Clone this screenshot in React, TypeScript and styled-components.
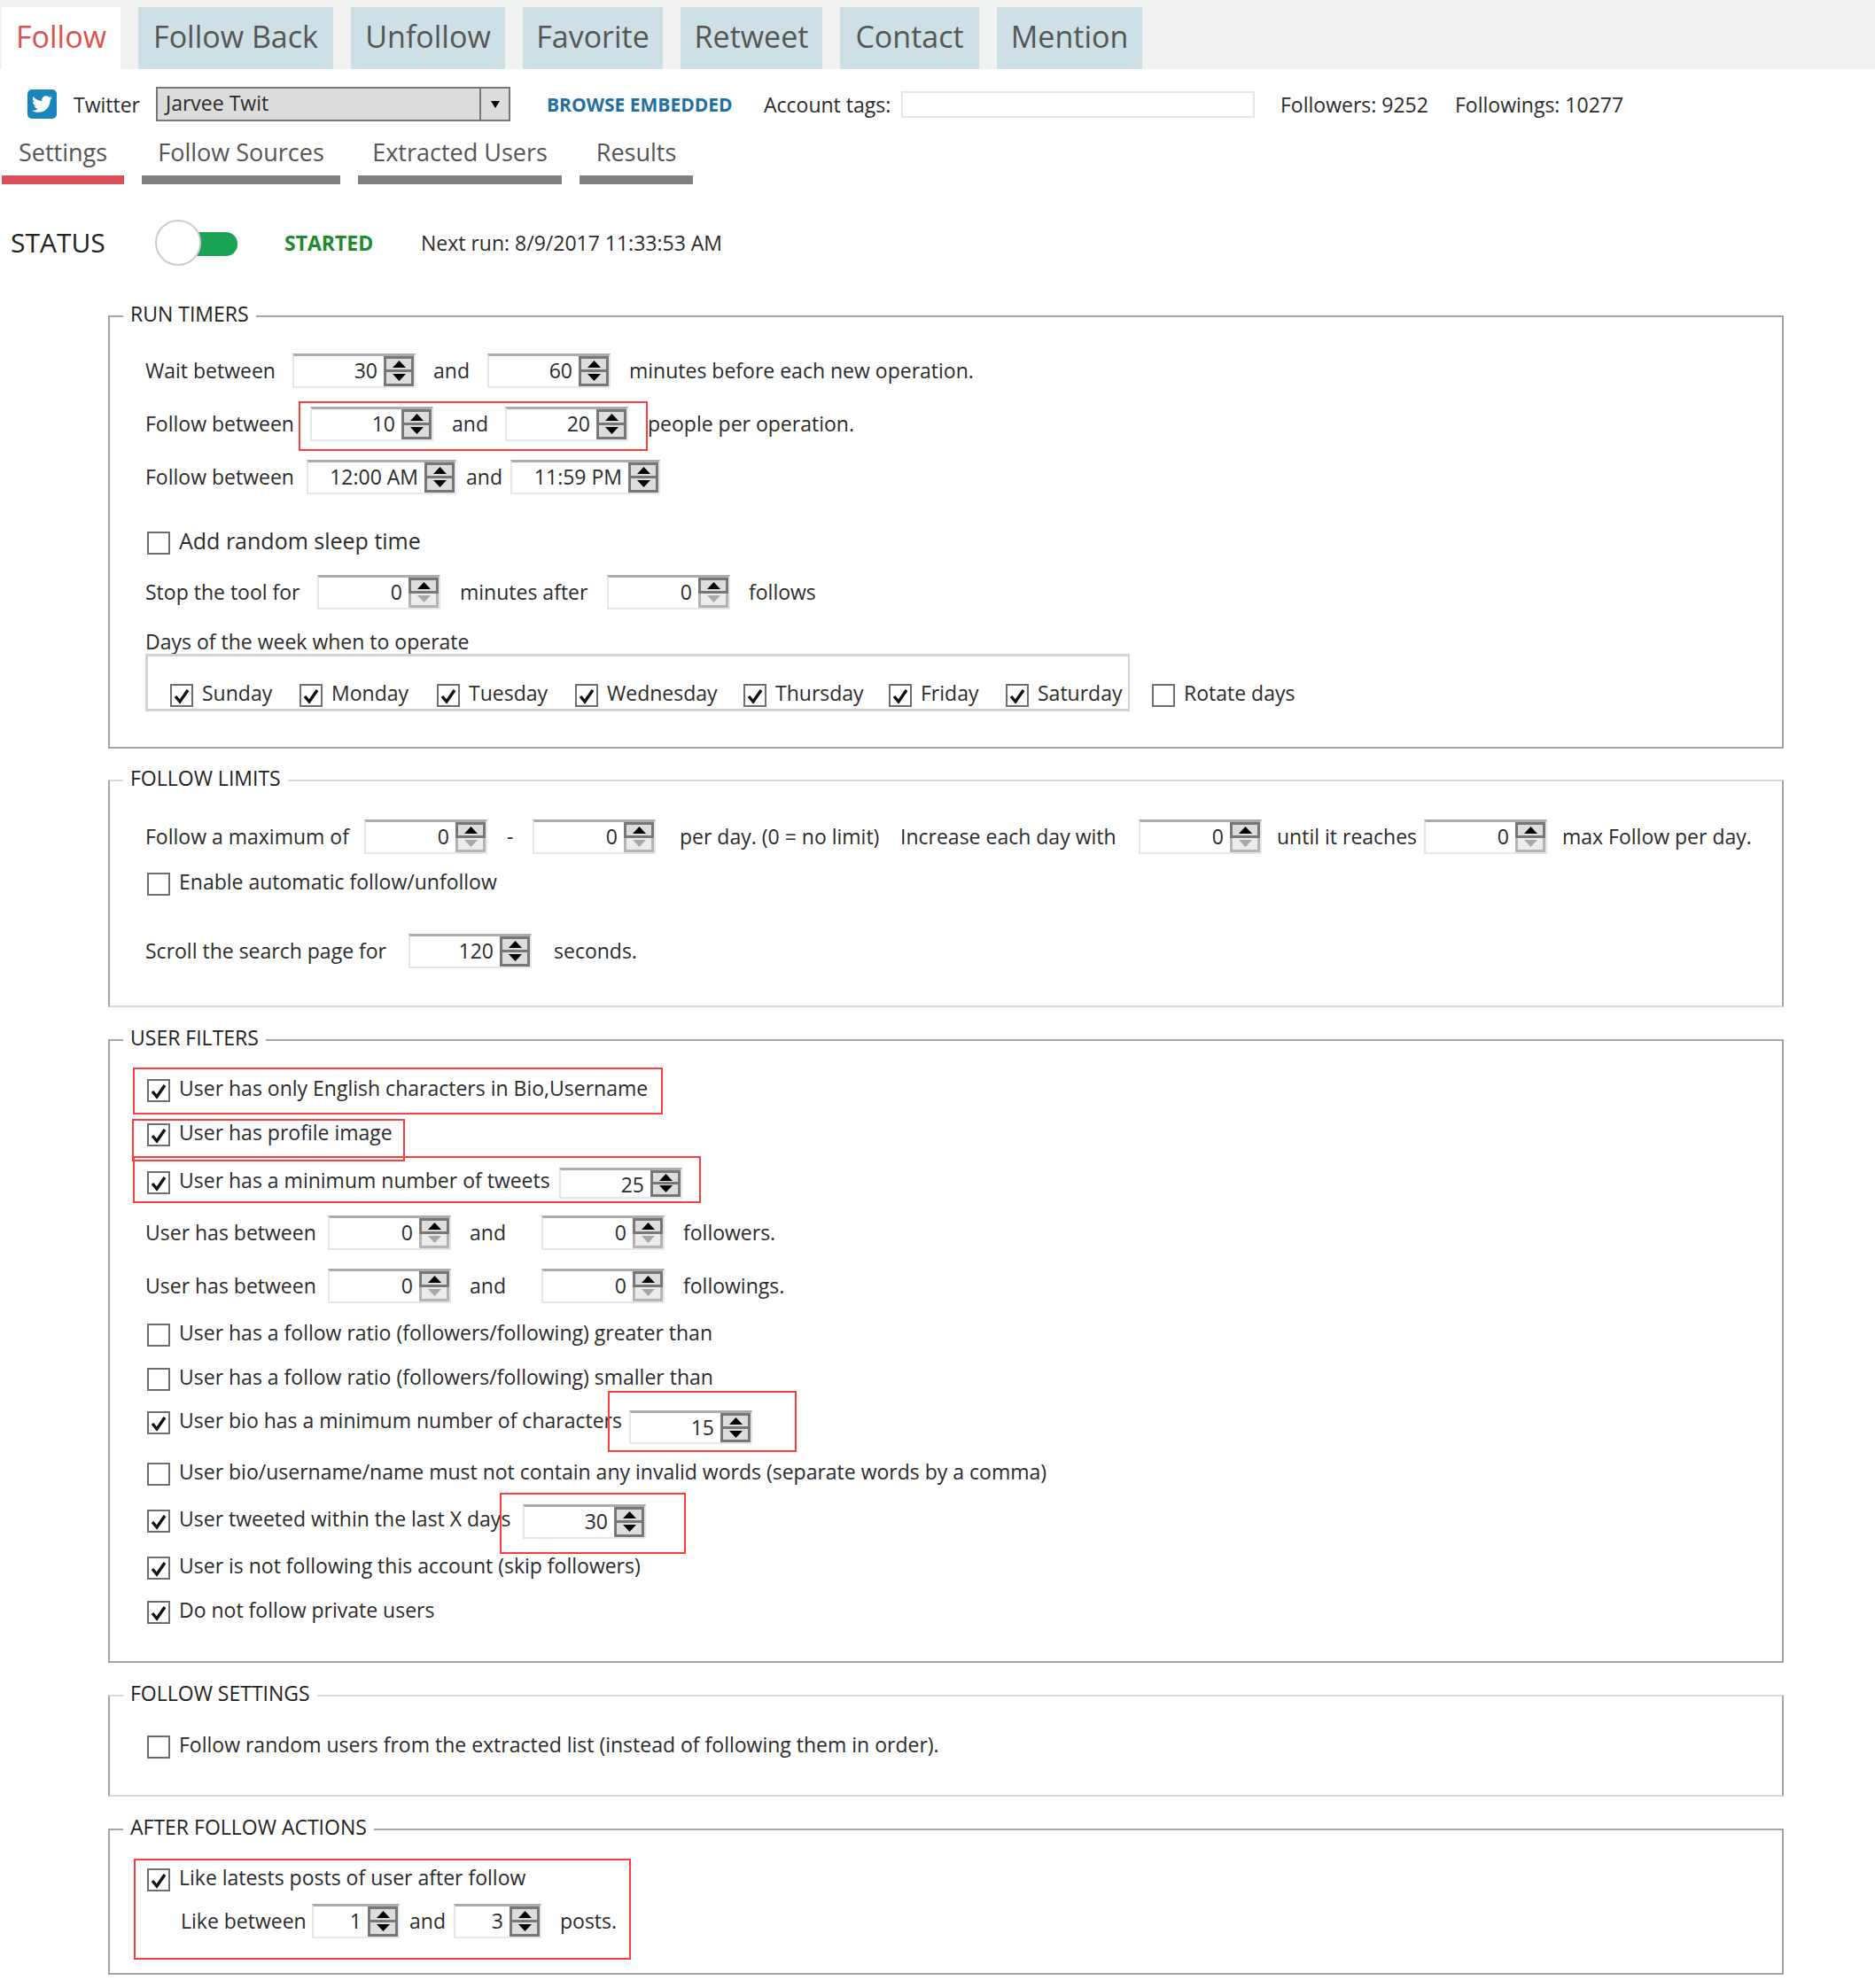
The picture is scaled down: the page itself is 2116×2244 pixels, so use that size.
import styled, { createGlobalStyle } from "styled-components";
import { FaTwitter } from "react-icons/fa";

const GlobalStyle = createGlobalStyle`
  html, body {
    margin: 0;
    padding: 0;
    background: #ffffff;
  }
  body {
    font-family: "Open Sans", "Liberation Sans", sans-serif;
    color: #2b2b2b;
  }
`;

const topTabs = ["Follow Back", "Unfollow", "Favorite", "Retweet", "Contact", "Mention"];
const tabWidths = [220, 174, 158, 160, 157, 164];
const subTabs = [
  { label: "Settings", width: 138 },
  { label: "Follow Sources", width: 224 },
  { label: "Extracted Users", width: 230 },
  { label: "Results", width: 128 },
];
const days = [
  { label: "Sunday", width: 146 },
  { label: "Monday", width: 155 },
  { label: "Tuesday", width: 156 },
  { label: "Wednesday", width: 190 },
  { label: "Thursday", width: 164 },
  { label: "Friday", width: 132 },
  { label: "Saturday", width: 129 },
];

const Arrow = ({ down, muted }: { down?: boolean; muted?: boolean }) => (
  <svg width="15" height="8" viewBox="0 0 15 8">
    <path d={down ? "M0 0H15L7.5 8Z" : "M0 8H15L7.5 0Z"} fill={muted ? "#a8a8a8" : "#000"} />
  </svg>
);

const Spinner = ({
  value,
  w = 139,
  h = 39,
  top = 0,
  muted,
}: {
  value: string;
  w?: number;
  h?: number;
  top?: number;
  muted?: boolean;
}) => (
  <SpinBox $w={w} $h={h} $top={top}>
    <SpinValue>{value}</SpinValue>
    <SpinButtons>
      <SpinButton>
        <Arrow />
      </SpinButton>
      <SpinButton $muted={muted} $lower>
        <Arrow down muted={muted} />
      </SpinButton>
    </SpinButtons>
  </SpinBox>
);

const Check = ({ on, label, large }: { on?: boolean; label: string; large?: boolean }) => (
  <CheckWrap>
    <CheckBox>
      {on && (
        <svg width="22" height="22" viewBox="0 0 22 22">
          <path d="M4 12L9 18L18 5" fill="none" stroke="#111" strokeWidth="3.4" />
        </svg>
      )}
    </CheckBox>
    <CheckText $large={large}>{label}</CheckText>
  </CheckWrap>
);

const App = () => {
  return (
    <Page>
      <GlobalStyle />
      <TabBar>
        <ActiveTab>Follow</ActiveTab>
        {topTabs.map((tab, i) => (
          <Tab key={tab} $w={tabWidths[i]}>
            {tab}
          </Tab>
        ))}
      </TabBar>

      <AccountBar>
        <TwitterIcon>
          <FaTwitter size={23} color="#ffffff" />
        </TwitterIcon>
        <Text $w={93} $ml={19}>
          Twitter
        </Text>
        <Select>
          <SelectValue>Jarvee Twit</SelectValue>
          <SelectArrow>
            <svg width="10" height="8" viewBox="0 0 10 8">
              <path d="M0 0H10L5 8Z" fill="#000" />
            </svg>
          </SelectArrow>
        </Select>
        <BrowseLink>BROWSE EMBEDDED</BrowseLink>
        <Text $w={155}>Account tags:</Text>
        <TagsInput />
        <Text $w={197} $ml={29}>
          Followers: 9252
        </Text>
        <Text>Followings: 10277</Text>
      </AccountBar>

      <SubTabBar>
        {subTabs.map((tab, i) => (
          <SubTab key={tab.label} $w={tab.width} $active={i === 0}>
            {tab.label}
          </SubTab>
        ))}
      </SubTabBar>

      <StatusRow>
        <StatusLabel>STATUS</StatusLabel>
        <Toggle>
          <ToggleTrack />
          <ToggleKnob />
        </Toggle>
        <StartedText>STARTED</StartedText>
        <Text>Next run: 8/9/2017 11:33:53 AM</Text>
      </StatusRow>

      <Group $mt={39}>
        <GroupTitle>RUN TIMERS</GroupTitle>
        <Row $mt={24}>
          <Text $w={166}>Wait between</Text>
          <Spinner value="30" />
          <Text $w={61} $ml={20}>
            and
          </Text>
          <Spinner value="60" />
          <Text $ml={21}>minutes before each new operation.</Text>
        </Row>
        <Row $mt={20}>
          <Text $w={186}>Follow between</Text>
          <Spinner value="10" />
          <Text $w={60} $ml={21}>
            and
          </Text>
          <Spinner value="20" />
          <Text $ml={22}>people per operation.</Text>
        </Row>
        <Row $mt={20}>
          <Text $w={182}>Follow between</Text>
          <Spinner value="12:00 AM" w={169} />
          <Text $w={50} $ml={11}>
            and
          </Text>
          <Spinner value="11:59 PM" w={169} />
        </Row>
        <Row $mt={35}>
          <Check label="Add random sleep time" large />
        </Row>
        <Row $mt={15}>
          <Text $w={194}>Stop the tool for</Text>
          <Spinner value="0" muted />
          <Text $w={166} $ml={22}>
            minutes after
          </Text>
          <Spinner value="0" muted />
          <Text $ml={21}>follows</Text>
        </Row>
        <LabelRow>Days of the week when to operate</LabelRow>
        <DaysRow>
          <DaysBox>
            {days.map((day) => (
              <DayItem key={day.label} $w={day.width}>
                <Check on label={day.label} />
              </DayItem>
            ))}
          </DaysBox>
          <RotateDays>
            <Check label="Rotate days" />
          </RotateDays>
        </DaysRow>
        <GroupEnd $h={40} />
      </Group>

      <Group $mt={19} $light>
        <GroupTitle>FOLLOW LIMITS</GroupTitle>
        <Row $mt={26}>
          <Text $w={247}>Follow a maximum of</Text>
          <Spinner value="0" muted />
          <Text $w={29} $ml={22}>
            -
          </Text>
          <Spinner value="0" muted />
          <Text $w={249} $ml={27}>
            per day. (0 = no limit)
          </Text>
          <Text $w={269}>Increase each day with</Text>
          <Spinner value="0" muted />
          <Text $w={166} $ml={17}>
            until it reaches
          </Text>
          <Spinner value="0" muted />
          <Text $ml={17}>max Follow per day.</Text>
        </Row>
        <Row $mt={14}>
          <Check label="Enable automatic follow/unfollow" />
        </Row>
        <Row $mt={35}>
          <Text $w={297}>Scroll the search page for</Text>
          <Spinner value="120" />
          <Text $ml={25}>seconds.</Text>
        </Row>
        <GroupEnd $h={42} />
      </Group>

      <Group $mt={20}>
        <GroupTitle>USER FILTERS</GroupTitle>
        <Row $mt={20}>
          <Check on label="User has only English characters in Bio,Username" />
        </Row>
        <Row $mt={10}>
          <Check on label="User has profile image" />
        </Row>
        <Row $mt={14}>
          <FixedCheck $w={467}>
            <Check on label="User has a minimum number of tweets" />
          </FixedCheck>
          <Spinner value="25" h={35} />
        </Row>
        <Row $mt={16}>
          <Text $w={206}>User has between</Text>
          <Spinner value="0" muted />
          <Text $w={81} $ml={21}>
            and
          </Text>
          <Spinner value="0" muted />
          <Text $ml={21}>followers.</Text>
        </Row>
        <Row $mt={20}>
          <Text $w={206}>User has between</Text>
          <Spinner value="0" muted />
          <Text $w={81} $ml={21}>
            and
          </Text>
          <Spinner value="0" muted />
          <Text $ml={21}>followings.</Text>
        </Row>
        <Row $mt={16}>
          <Check label="User has a follow ratio (followers/following) greater than" />
        </Row>
        <Row $mt={10}>
          <Check label="User has a follow ratio (followers/following) smaller than" />
        </Row>
        <Row $mt={9}>
          <FixedCheck $w={546}>
            <Check on label="User bio has a minimum number of characters" />
          </FixedCheck>
          <Spinner value="15" h={38} top={10} />
        </Row>
        <Row $mt={18}>
          <Check label="User bio/username/name must not contain any invalid words (separate words by a comma)" />
        </Row>
        <Row $mt={13}>
          <FixedCheck $w={426}>
            <Check on label="User tweeted within the last X days" />
          </FixedCheck>
          <Spinner value="30" />
        </Row>
        <Row $mt={13}>
          <Check on label="User is not following this account (skip followers)" />
        </Row>
        <Row $mt={10}>
          <Check on label="Do not follow private users" />
        </Row>
        <GroupEnd $h={35} />
      </Group>

      <Group $mt={20} $light>
        <GroupTitle>FOLLOW SETTINGS</GroupTitle>
        <Row $mt={21}>
          <Check label="Follow random users from the extracted list (instead of following them in order)." />
        </Row>
        <GroupEnd $h={34} />
      </Group>

      <Group $mt={20}>
        <GroupTitle>AFTER FOLLOW ACTIONS</GroupTitle>
        <Row $mt={20}>
          <Check on label="Like latests posts of user after follow" />
        </Row>
        <Row $mt={6}>
          <Text $w={148} $ml={40}>
            Like between
          </Text>
          <Spinner value="1" w={99} />
          <Text $w={50} $ml={11}>
            and
          </Text>
          <Spinner value="3" w={99} />
          <Text $ml={21}>posts.</Text>
        </Row>
        <GroupEnd $h={39} />
      </Group>

      <Highlight $x={337} $y={453} $w={394} $h={56} />
      <Highlight $x={150} $y={1205} $w={598} $h={53} />
      <Highlight $x={149} $y={1263} $w={308} $h={48} />
      <Highlight $x={150} $y={1305} $w={641} $h={53} />
      <Highlight $x={686} $y={1570} $w={213} $h={69} />
      <Highlight $x={564} $y={1685} $w={210} $h={69} />
      <Highlight $x={151} $y={2098} $w={561} $h={114} />
    </Page>
  );
};

const Page = styled.div`
  position: relative;
  width: 2116px;
  min-height: 2244px;
  overflow: hidden;
`;

const TabBar = styled.div`
  display: flex;
  gap: 20px;
  height: 70px;
  padding: 8px 0 0 2px;
  background: #f1f3f3;
`;

const ActiveTab = styled.div`
  width: 134px;
  background: #ffffff;
  color: #d9534f;
  font-size: 34px;
  line-height: 66px;
  text-align: center;
`;

const Tab = styled.div<{ $w: number }>`
  width: ${(p) => p.$w}px;
  background: #cde0e6;
  color: #555555;
  font-size: 34px;
  line-height: 66px;
  text-align: center;
`;

const AccountBar = styled.div`
  display: flex;
  align-items: center;
  height: 39px;
  margin-top: 20px;
  padding-left: 31px;
`;

const TwitterIcon = styled.div`
  display: flex;
  align-items: center;
  justify-content: center;
  width: 33px;
  height: 33px;
  border-radius: 5px;
  background: #1a85bd;
`;

const Text = styled.div<{ $w?: number; $ml?: number }>`
  flex: none;
  width: ${(p) => (p.$w ? `${p.$w}px` : "auto")};
  margin-left: ${(p) => p.$ml || 0}px;
  font-size: 23px;
  line-height: 30px;
  white-space: nowrap;
`;

const Select = styled.div`
  display: flex;
  box-sizing: border-box;
  width: 400px;
  height: 39px;
  border: 2px solid #777777;
  background: #dcdcdc;
`;

const SelectValue = styled.div`
  flex: 1;
  padding-left: 9px;
  font-size: 23px;
  line-height: 33px;
`;

const SelectArrow = styled.div`
  display: flex;
  align-items: center;
  justify-content: center;
  width: 31px;
  border-left: 2px solid #777777;
`;

const BrowseLink = styled.div`
  flex: none;
  width: 245px;
  margin-left: 41px;
  color: #1f6fa3;
  font-size: 21px;
  font-weight: 700;
  white-space: nowrap;
`;

const TagsInput = styled.div`
  flex: none;
  box-sizing: border-box;
  width: 399px;
  height: 30px;
  border: 2px solid #e3e6ea;
  background: #ffffff;
`;

const SubTabBar = styled.div`
  display: flex;
  gap: 20px;
  margin: 13px 0 0 2px;
`;

const SubTab = styled.div<{ $w: number; $active?: boolean }>`
  box-sizing: border-box;
  width: ${(p) => p.$w}px;
  height: 58px;
  border-bottom: 10px solid ${(p) => (p.$active ? "#d9505a" : "#808080")};
  color: #555555;
  font-size: 27px;
  line-height: 44px;
  text-align: center;
  white-space: nowrap;
`;

const StatusRow = styled.div`
  display: flex;
  align-items: center;
  height: 54px;
  margin-top: 39px;
  padding-left: 12px;
`;

const StatusLabel = styled.div`
  width: 163px;
  font-size: 30px;
  line-height: 36px;
  color: #222222;
`;

const Toggle = styled.div`
  position: relative;
  width: 93px;
  height: 54px;
`;

const ToggleTrack = styled.div`
  position: absolute;
  top: 15px;
  left: 20px;
  width: 73px;
  height: 27px;
  border-radius: 0 13px 13px 0;
  background: #1ba355;
`;

const ToggleKnob = styled.div`
  position: absolute;
  top: 1px;
  left: 0;
  box-sizing: border-box;
  width: 52px;
  height: 52px;
  border: 2px solid #cfcccc;
  border-radius: 50%;
  background: #ffffff;
`;

const StartedText = styled.div`
  width: 154px;
  margin-left: 53px;
  color: #1e8a2e;
  font-size: 23px;
  font-weight: 700;
`;

const Group = styled.fieldset<{ $mt: number; $light?: boolean }>`
  box-sizing: border-box;
  width: 1891px;
  margin: ${(p) => p.$mt}px 0 0 122px;
  padding: 0 0 0 40px;
  border: 2px solid #a5a5a5;
  border-top-color: ${(p) => (p.$light ? "#d8d8d8" : "#a5a5a5")};
  border-bottom-color: ${(p) => (p.$light ? "#d8d8d8" : "#a5a5a5")};
  min-inline-size: 0;
`;

const GroupTitle = styled.legend`
  height: 34px;
  margin-left: -25px;
  padding: 0 8px;
  color: #222222;
  font-size: 23px;
  line-height: 28px;
`;

const GroupEnd = styled.div<{ $h: number }>`
  height: ${(p) => p.$h}px;
`;

const Row = styled.div<{ $mt: number }>`
  display: flex;
  align-items: center;
  height: 40px;
  margin-top: ${(p) => p.$mt}px;
`;

const LabelRow = styled.div`
  height: 28px;
  margin-top: 22px;
  font-size: 23px;
  line-height: 28px;
`;

const DaysRow = styled.div`
  display: flex;
`;

const DaysBox = styled.div`
  display: flex;
  box-sizing: border-box;
  width: 1111px;
  height: 65px;
  padding: 26px 0 0 23px;
  border: 3px solid #d2d2d2;
  border-right-width: 2px;
`;

const DayItem = styled.div<{ $w: number }>`
  width: ${(p) => p.$w}px;
`;

const RotateDays = styled.div`
  margin: 29px 0 0 23px;
`;

const FixedCheck = styled.div<{ $w: number }>`
  flex: none;
  width: ${(p) => p.$w}px;
`;

const CheckWrap = styled.div`
  display: flex;
  align-items: center;
  margin-left: 2px;
`;

const CheckBox = styled.div`
  display: flex;
  flex: none;
  align-items: center;
  justify-content: center;
  box-sizing: border-box;
  width: 26px;
  height: 26px;
  border: 2px solid #6f6f6f;
`;

const CheckText = styled.div<{ $large?: boolean }>`
  margin-left: 10px;
  padding-bottom: 6px;
  font-size: ${(p) => (p.$large ? 25 : 23)}px;
  line-height: 30px;
  white-space: nowrap;
`;

const SpinBox = styled.div<{ $w: number; $h: number; $top: number }>`
  display: flex;
  flex: none;
  box-sizing: border-box;
  width: ${(p) => p.$w}px;
  height: ${(p) => p.$h}px;
  margin-top: ${(p) => p.$top}px;
  border: 2px solid #e3e7ee;
  border-top: 3px solid #aaaab0;
`;

const SpinValue = styled.div`
  flex: 1;
  padding-right: 7px;
  font-size: 23px;
  line-height: 32px;
  text-align: right;
  white-space: nowrap;
`;

const SpinButtons = styled.div`
  display: flex;
  flex: none;
  flex-direction: column;
  width: 34px;
`;

const SpinButton = styled.div<{ $muted?: boolean; $lower?: boolean }>`
  display: flex;
  flex: 1;
  align-items: center;
  justify-content: center;
  box-sizing: border-box;
  border: 3px solid ${(p) => (p.$muted ? "#b4b4b4" : "#777777")};
  border-top-width: ${(p) => (p.$lower ? 0 : 3)}px;
  background: ${(p) => (p.$muted ? "#ececec" : "#dddddd")};
`;

const Highlight = styled.div<{ $x: number; $y: number; $w: number; $h: number }>`
  position: absolute;
  top: ${(p) => p.$y}px;
  left: ${(p) => p.$x}px;
  box-sizing: border-box;
  width: ${(p) => p.$w}px;
  height: ${(p) => p.$h}px;
  border: 2px solid #ff3b3b;
  pointer-events: none;
`;

export default App;
